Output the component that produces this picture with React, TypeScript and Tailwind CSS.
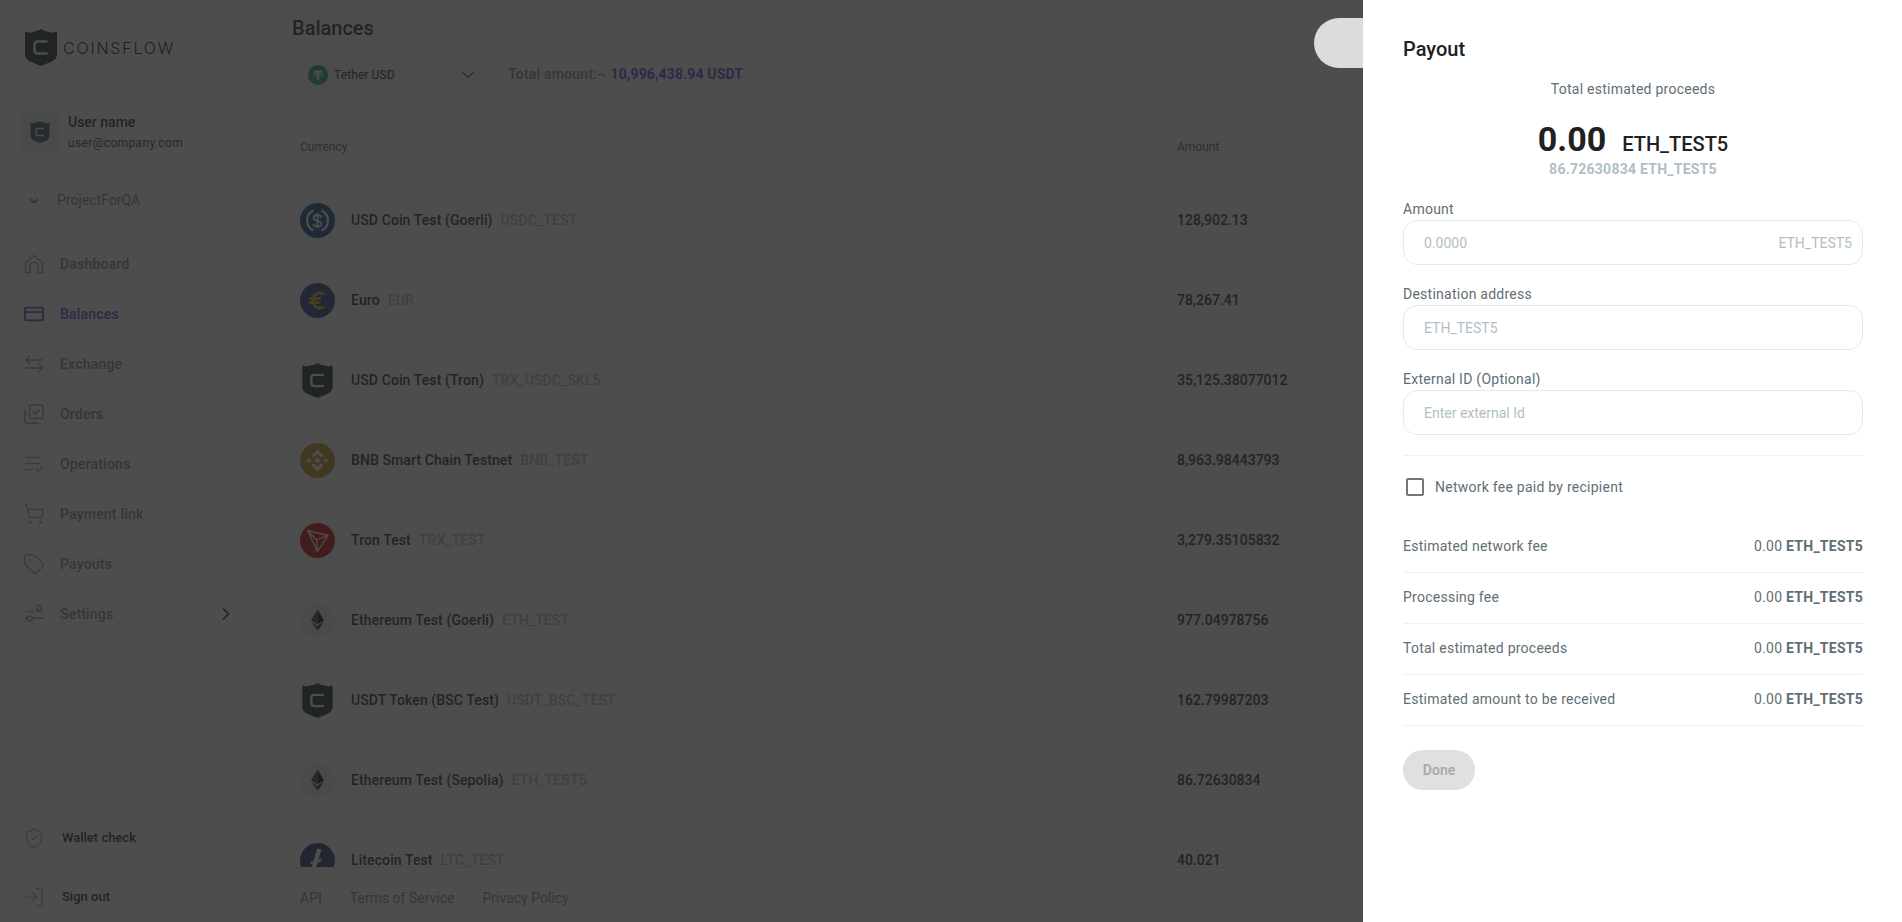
import { ChevronDown, ChevronRight, CreditCard, LogIn, ShieldCheck, ShoppingCart, Tag } from "lucide-react";
import type { ReactNode } from "react";

/* ---------- logos ---------- */
function Shield({ className, letter = "#ffffff", fill = "#263238" }: { className?: string; letter?: string; fill?: string }) {
  return (
    <svg viewBox="0 0 32 37" className={className} aria-hidden>
      <path d="M0 2.500c2.500 1.600 6 1.400 9-.1 2 .1 4.500-.6 7-2.400 2.500 1.800 5 2.500 7 2.400 3 1.500 6.500 1.700 9 .1V25c0 3.500-1.500 5.500-4.500 7.200L16 37 4.500 32.200C1.500 30.500 0 28.500 0 25Z" fill={fill} />
      <path d="M22.500 12.500h-10a3 3 0 0 0-3 3v6a3 3 0 0 0 3 3h10" fill="none" stroke={letter} strokeWidth="2.400" />
    </svg>
  );
}

/* ---------- coin icons ---------- */
function UsdcIcon() {
  return (
    <svg viewBox="0 0 35 35" className="h-[35px] w-[35px]" aria-hidden>
      <circle cx="17.500" cy="17.500" r="17.500" fill="#1a4f8c" />
      <path d="M13.500 7.500a11 11 0 0 0 0 20M21.500 7.500a11 11 0 0 1 0 20" fill="none" stroke="#fff" strokeWidth="2.200" />
      <path d="M21.500 14.500c-.500-1.600-2-2.500-4-2.500-2.400 0-4 1.200-4 3 0 4.200 8 2 8 5.800 0 1.800-1.700 2.900-4 2.900-2.200 0-3.700-1-4.200-2.700M17.500 10v15" fill="none" stroke="#fff" strokeWidth="1.800" />
    </svg>
  );
}

function EuroIcon() {
  return (
    <svg viewBox="0 0 35 35" className="h-[35px] w-[35px]" aria-hidden>
      <circle cx="17.500" cy="17.500" r="17.500" fill="#2c4686" />
      <path d="M24 11.500c-1.200-1-2.700-1.500-4.300-1.500-4 0-6.700 3.200-6.700 7.500s2.700 7.500 6.700 7.500c1.600 0 3.100-.5 4.300-1.500M9.500 15.500h11.500M9.500 19.500h10" fill="none" stroke="#d9b815" strokeWidth="2.800" />
    </svg>
  );
}

function BnbIcon() {
  return (
    <svg viewBox="0 0 35 35" className="h-[35px] w-[35px]" aria-hidden>
      <circle cx="17.500" cy="17.500" r="17.500" fill="#c49628" />
      <path d="M17.500 6.500l6 6-2.200 2.200-3.800-3.800-3.800 3.800-2.200-2.200ZM17.500 28.500l6-6-2.200-2.200-3.800 3.800-3.800-3.800-2.200 2.200ZM6.500 17.500l2.500-2.500 2.500 2.500-2.500 2.500ZM23.500 17.500l2.500-2.500 2.500 2.500-2.500 2.500ZM17.500 14.500l3 3-3 3-3-3Z" fill="#fff" />
    </svg>
  );
}

function TronIcon() {
  return (
    <svg viewBox="0 0 35 35" className="h-[35px] w-[35px]" aria-hidden>
      <circle cx="17.500" cy="17.500" r="17.500" fill="#c40f16" />
      <path d="M7.500 7.500l20.500 5-10.500 16Zm0 0l9 9.500 1 11.500m-1-11.500L28 12.500" fill="none" stroke="#fff" strokeWidth="1.300" strokeLinejoin="round" />
    </svg>
  );
}

function EthIcon() {
  return (
    <svg viewBox="0 0 35 35" className="h-[35px] w-[35px]" aria-hidden>
      <circle cx="17.500" cy="17.500" r="17.500" fill="#eef0f3" />
      <path d="M17.500 6.500l-6.500 11 6.500 3.800Z" fill="#444" />
      <path d="M17.500 6.500l6.500 11-6.500 3.800Z" fill="#111" />
      <path d="M11 18.800l6.500 9.200v-5.400Z" fill="#666" />
      <path d="M24 18.800L17.500 28v-5.400Z" fill="#333" />
    </svg>
  );
}

function LtcIcon() {
  return (
    <svg viewBox="0 0 35 35" className="h-[35px] w-[35px]" aria-hidden>
      <circle cx="17.500" cy="17.500" r="17.500" fill="#264478" />
      <path d="M17 6h4.500l-3 11 3.500-1.200-.8 2.700-3.600 1.200-1.500 5h9.400l-.8 3H10.500l2.200-7-2.500.8.700-2.500 2.600-.9Z" fill="#fff" />
    </svg>
  );
}

function ShieldCoin() {
  return (
    <div className="flex h-[35px] w-[35px] items-center justify-center">
      <Shield className="h-[35px] w-[31px]" />
    </div>
  );
}

function TetherIcon() {
  return (
    <svg viewBox="0 0 20 20" className="h-5 w-5" aria-hidden>
      <circle cx="10" cy="10" r="10" fill="#26a17b" />
      <path d="M5.500 5.500h9v2.200h-3.300V15H8.800V7.700H5.500Z" fill="#fff" />
      <ellipse cx="10" cy="9.800" rx="5.500" ry="1.300" fill="none" stroke="#fff" strokeWidth=".8" />
    </svg>
  );
}

/* ---------- sidebar icons ---------- */
const iconCls = "h-5 w-5 text-[#90a4ae]";
const wideIconCls = "-mx-px h-[22px] w-[22px]";

function HomeIcon() {
  return (
    <svg viewBox="0 0 20 20" fill="none" stroke="currentColor" strokeWidth="1.500" strokeLinejoin="round" className={iconCls} aria-hidden>
      <path d="M1.500 18.500V8.500L10 1.500l8.500 7v10h-4.500V12a4 4 0 0 0-8 0v6.500Z" />
    </svg>
  );
}

function ExchangeIcon() {
  return (
    <svg viewBox="0 0 20 20" fill="none" stroke="currentColor" strokeWidth="1.500" className={iconCls} aria-hidden>
      <path d="M19 6H1.500M6 1.500L1.500 6M1 14h17.500M14 9.500l4.500 4.500-4.500 4.500M6 10.500L1.500 6" />
    </svg>
  );
}

function OrdersIcon() {
  return (
    <svg viewBox="0 0 20 20" fill="none" stroke="currentColor" strokeWidth="1.500" strokeLinejoin="round" className={iconCls} aria-hidden>
      <rect x="5.500" y="1" width="13.500" height="13.500" rx="1.500" />
      <path d="M9 7.500l2.500 2.500 4-4.500M1 5.500V17a2 2 0 0 0 2 2h11.500" />
    </svg>
  );
}

function OperationsIcon() {
  return (
    <svg viewBox="0 0 20 20" fill="none" stroke="currentColor" strokeWidth="1.500" className={iconCls} aria-hidden>
      <path d="M1 3.500h15M1 9.500h15M1 15.500h8M12 14.500l2.500 3 4.500-5" />
    </svg>
  );
}

function SettingsIcon() {
  return (
    <svg viewBox="0 0 20 20" fill="none" stroke="currentColor" strokeWidth="1.500" className={iconCls} aria-hidden>
      <path d="M1 7.500h9M1 14h2.500M9 14h10M12.500 7.500H19" />
      <circle cx="15" cy="4" r="2.500" />
      <circle cx="6" cy="14.500" r="2.500" />
    </svg>
  );
}

/* ---------- data ---------- */
const NAV: { label: string; icon: ReactNode; active?: boolean; arrow?: boolean }[] = [
  { label: "Dashboard", icon: <HomeIcon /> },
  { label: "Balances", icon: <CreditCard className={`${wideIconCls} text-[#5e4fdb]`} strokeWidth={2} />, active: true },
  { label: "Exchange", icon: <ExchangeIcon /> },
  { label: "Orders", icon: <OrdersIcon /> },
  { label: "Operations", icon: <OperationsIcon /> },
  { label: "Payment link", icon: <ShoppingCart className={`${wideIconCls} text-[#90a4ae]`} strokeWidth={1.400} /> },
  { label: "Payouts", icon: <Tag className={`${wideIconCls} text-[#90a4ae]`} strokeWidth={1.400} /> },
  { label: "Settings", icon: <SettingsIcon />, arrow: true },
];

const COINS: { name: string; code: string; amount: string; icon: ReactNode }[] = [
  { name: "USD Coin Test (Goerli)", code: "USDC_TEST", amount: "128,902.13", icon: <UsdcIcon /> },
  { name: "Euro", code: "EUR", amount: "78,267.41", icon: <EuroIcon /> },
  { name: "USD Coin Test (Tron)", code: "TRX_USDC_SKL5", amount: "35,125.38077012", icon: <ShieldCoin /> },
  { name: "BNB Smart Chain Testnet", code: "BNB_TEST", amount: "8,963.98443793", icon: <BnbIcon /> },
  { name: "Tron Test", code: "TRX_TEST", amount: "3,279.35105832", icon: <TronIcon /> },
  { name: "Ethereum Test (Goerli)", code: "ETH_TEST", amount: "977.04978756", icon: <EthIcon /> },
  { name: "USDT Token (BSC Test)", code: "USDT_BSC_TEST", amount: "162.79987203", icon: <ShieldCoin /> },
  { name: "Ethereum Test (Sepolia)", code: "ETH_TEST5", amount: "86.72630834", icon: <EthIcon /> },
  { name: "Litecoin Test", code: "LTC_TEST", amount: "40.021", icon: <LtcIcon /> },
];

const FEES = ["Estimated network fee", "Processing fee", "Total estimated proceeds", "Estimated amount to be received"];

/* ---------- sidebar ---------- */
function Sidebar() {
  return (
    <aside className="flex h-full w-[260px] shrink-0 flex-col border-r border-[#e8eaec]">
      <div className="flex h-[112px] items-start pl-[25px] pt-[29px]">
        <Shield className="h-[37px] w-[32px]" />
        <span className="ml-[6px] mt-[9px] font-['Inter',sans-serif] text-[16px] font-light leading-[20px] tracking-[1.8px] text-[#0f1517]">COINSFLOW</span>
      </div>
      <div className="flex h-[61px] items-start border-b border-[#e8eaec] pl-5">
        <div className="flex h-10 w-10 items-center justify-center rounded-lg bg-[#eceff1]">
          <Shield className="h-[22px] w-5" fill="#455a64" />
        </div>
        <div className="ml-2">
          <p className="text-[14px] font-medium leading-5 text-[#263238]">User name</p>
          <p className="pt-px text-[12px] leading-5 tracking-[0.35px] text-[#37474f]">user@company.com</p>
        </div>
      </div>
      <div className="flex h-[54px] items-center border-b border-[#e8eaec] pl-[27px] pt-[2px]">
        <ChevronDown className="h-3.5 w-3.5 text-[#546e7a]" />
        <span className="ml-[16px] text-[14px] text-[#78909c]">ProjectForQA</span>
      </div>
      <nav className="flex-1 pt-3">
        {NAV.map((n) => (
          <div key={n.label} className="flex h-[50px] items-center pl-6 pr-[23px]">
            {n.icon}
            <span className={`ml-4 flex-1 text-[14px] font-medium tracking-[0.2px] ${n.active ? "text-[#5e4fdb]" : "text-[#78909c]"}`}>{n.label}</span>
            {n.arrow ? <ChevronRight className="h-5 w-5 text-[#263238]" /> : null}
          </div>
        ))}
      </nav>
      <div className="flex h-[60px] items-center border-t border-[#e8eaec] pl-6">
        <ShieldCheck className={`${wideIconCls} text-[#90a4ae]`} strokeWidth={1.200} />
        <span className="ml-[18px] text-[13px] font-medium text-[#263238]">Wallet check</span>
      </div>
      <div className="flex h-[55px] items-center border-t border-[#e8eaec] pl-6 pt-1">
        <LogIn className={`${wideIconCls} text-[#90a4ae]`} strokeWidth={1.200} />
        <span className="ml-[18px] text-[13px] font-medium text-[#263238]">Sign out</span>
      </div>
    </aside>
  );
}

/* ---------- main table ---------- */
function Main() {
  return (
    <main className="flex h-full min-w-0 flex-1 flex-col">
      <header className="h-[114px] shrink-0 border-b border-[#e8eaec] pl-8">
        <h1 className="pt-[14px] text-[20px] font-medium leading-7 text-[#263238]">Balances</h1>
        <div className="mt-[13px] flex items-center">
          <div className="flex h-[38px] w-[200px] items-center rounded-full bg-[#f7f8f9] pl-4 pr-[14px] pt-px">
            <TetherIcon />
            <span className="ml-[6px] flex-1 text-[12px] tracking-[0.1px] text-[#263238]">Tether USD</span>
            <ChevronDown className="h-5 w-5 text-[#5e4fdb]" strokeWidth={1.500} />
          </div>
          <span className="ml-4 text-[14px] font-medium tracking-[0.2px] text-[#78909c]">Total amount:~</span>
          <span className="ml-1 text-[14px] font-bold tracking-[0.15px] text-[#5e4fdb]">10,996,438.94 USDT</span>
        </div>
      </header>
      <div className="flex h-[67px] shrink-0 items-center border-b border-[#e8eaec] pl-10 text-[12px] text-[#546e7a]">
        <span className="w-[877px]">Currency</span>
        <span>Amount</span>
      </div>
      <div className="min-h-0 flex-1 overflow-hidden">
        {COINS.map((c) => (
          <div key={c.code} className="flex h-20 items-center border-b border-[#e8eaec] pl-10">
            {c.icon}
            <div className="ml-4 flex w-[826px] items-center text-[14px] font-medium tracking-[0.1px]">
              <span className="text-[#263238]">{c.name}</span>
              <span className="ml-2 text-[#b0bec5]">{c.code}</span>
            </div>
            <span className="text-[14px] font-medium text-[#263238]">{c.amount}</span>
          </div>
        ))}
      </div>
      <footer className="flex h-[55px] shrink-0 items-center gap-7 border-t border-[#e8eaec] bg-white pl-10 pt-[7px] text-[14px] text-[#78909c]">
        <span>API</span>
        <span>Terms of Service</span>
        <span>Privacy Policy</span>
      </footer>
    </main>
  );
}

/* ---------- payout drawer ---------- */
function Field({ label, placeholder, suffix }: { label: string; placeholder: string; suffix?: string }) {
  return (
    <div>
      <p className="text-[14px] leading-[21px] tracking-[0.25px] text-[#616e75]">{label}</p>
      <div className="flex h-[45px] items-center justify-between rounded-[14px] border border-[#e6e9eb] pl-5 pr-[10px] pt-[2px] text-[14px] text-[#b0bec5]">
        <span>{placeholder}</span>
        {suffix ? <span>{suffix}</span> : null}
      </div>
    </div>
  );
}

function Drawer() {
  return (
    <>
      <div className="absolute left-[1314px] top-[18px] h-[50px] w-[70px] rounded-l-[25px] bg-[#dcdcdc]" />
      <section className="absolute bottom-0 right-0 top-0 w-[539px] bg-white pl-10 pr-[39px] pt-[37px]">
        <h2 className="text-[20px] font-medium leading-6 text-[#212121]">Payout</h2>
        <p className="mt-[18px] text-center text-[14px] leading-5 tracking-[0.25px] text-[#616e75]">Total estimated proceeds</p>
        <div className="mt-[20px] flex items-baseline justify-center leading-[40px]">
          <span className="text-[34px] font-bold text-[#212121]">0.00</span>
          <span className="ml-4 text-[20px] font-medium text-[#212121]">ETH_TEST5</span>
        </div>
        <p className="-mt-[5px] text-center text-[14px] font-bold leading-5 tracking-[0.25px] text-[#b0bec5]">86.72630834 ETH_TEST5</p>
        <div className="mt-[20px] flex flex-col gap-[19px]">
          <Field label="Amount" placeholder="0.0000" suffix="ETH_TEST5" />
          <Field label="Destination address" placeholder="ETH_TEST5" />
          <Field label="External ID (Optional)" placeholder="Enter external Id" />
        </div>
        <div className="mt-5 border-t border-[#eef0f2] pl-[3px] pt-[21px]">
          <div className="flex items-center">
            <span className="h-[18px] w-[18px] rounded-[2px] border-2 border-[#757575]" />
            <span className="ml-[11px] text-[14px] leading-5 tracking-[0.25px] text-[#616e75]">Network fee paid by recipient</span>
          </div>
        </div>
        <div className="mt-[25px]">
          {FEES.map((f) => (
            <div key={f} className="flex h-[51px] items-center justify-between border-b border-[#eef0f2] pb-[2px] text-[14px] tracking-[0.25px] text-[#616e75]">
              <span>{f}</span>
              <span>
                0.00 <b className="font-bold">ETH_TEST5</b>
              </span>
            </div>
          ))}
        </div>
        <div className="mt-[24px] flex h-10 w-[72px] items-center justify-center rounded-full bg-[#e0e0e0] text-[14px] font-medium text-[#a6a6a6]">Done</div>
      </section>
    </>
  );
}

export default function App() {
  return (
    <div className="relative flex h-[922px] w-[1902px] overflow-hidden bg-white font-['Roboto',sans-serif]">
      <Sidebar />
      <Main />
      <div className="absolute inset-0 bg-[#212121]/80" />
      <Drawer />
    </div>
  );
}
